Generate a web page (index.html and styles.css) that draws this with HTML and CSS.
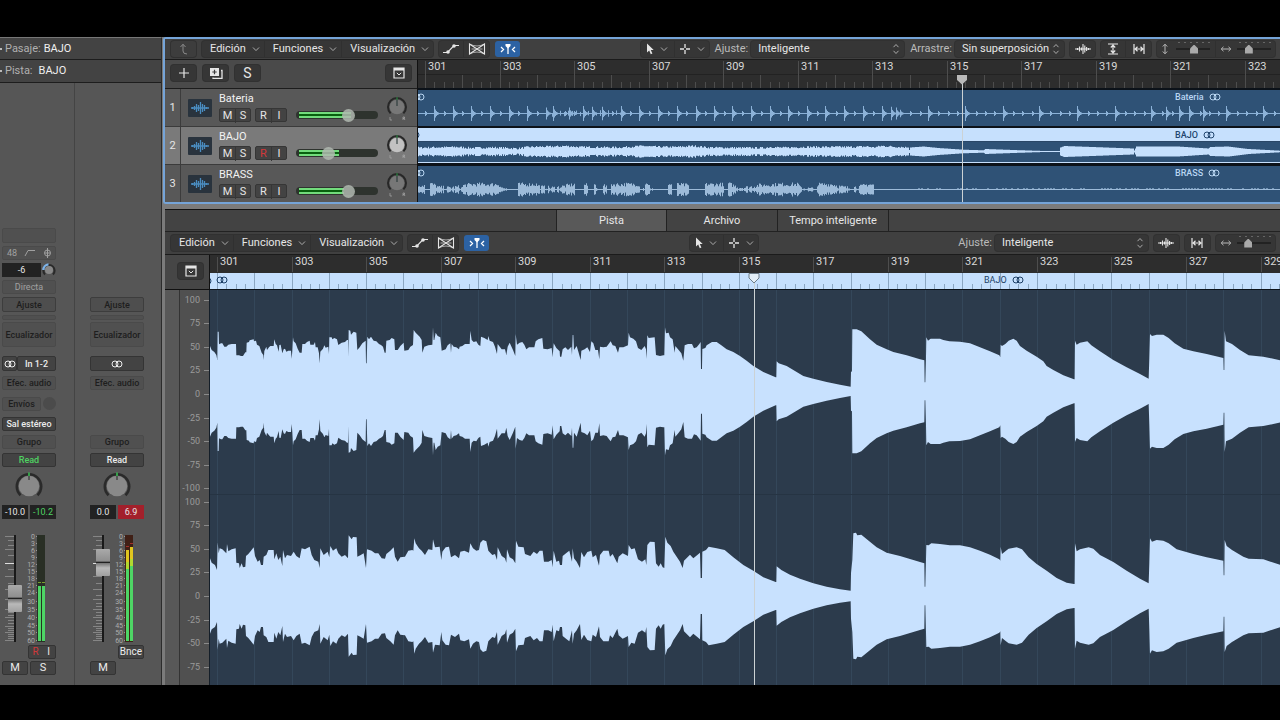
FILE: index.html
```html
<!DOCTYPE html>
<html lang="es">
<head>
<meta charset="utf-8">
<title>BAJO - Pistas</title>
<link rel="stylesheet" href="styles.css">
</head>
<body>
<svg class="symbols" aria-hidden="true">
  <symbol id="chev" viewBox="0 0 8 6"><path d="M1 1.5 4 4.600 7 1.5" fill="none" stroke="currentColor"/></symbol>
  <symbol id="updown" viewBox="0 0 8 12"><path d="M1.5 4.2 4 1.5 6.5 4.2M1.5 7.8 4 10.5 6.5 7.8" fill="none" stroke="currentColor"/></symbol>
  <symbol id="auto" viewBox="0 0 18 12"><path d="M1 9.5H5.5L12 2.5H17" fill="none" stroke="currentColor" stroke-width="1.2"/><circle cx="6" cy="9" r="1.8" fill="currentColor"/><circle cx="12" cy="3" r="1.8" fill="currentColor"/></symbol>
  <symbol id="flex" viewBox="0 0 18 12"><path d="M1.500 1V11L16.500 1V11Z" fill="none" stroke="currentColor" stroke-width="1.100"/><path d="M1.500 1Q9 5 16.500 1M1.500 11Q9 7 16.500 11M3.500 6H7M11 6H14.500" fill="none" stroke="currentColor" stroke-width=".7"/></symbol>
  <symbol id="catch" viewBox="0 0 16 12"><path d="M1 4 3.500 6.500 1 9M15 4 12.500 6.500 15 9M8 3V11" fill="none" stroke="currentColor" stroke-width="1.300"/><path d="M5.500 1H10.500V3L8 5.500 5.500 3Z" fill="currentColor"/></symbol>
  <symbol id="arrow" viewBox="0 0 8 12"><path d="M1 .5V9.500L3.200 7.500 4.800 11.300 6.400 10.600 4.800 7H7.700Z" fill="currentColor"/></symbol>
  <symbol id="cross" viewBox="0 0 12 12"><path d="M6 1V5M6 7V11M1 6H5M7 6H11" stroke="currentColor" stroke-width="1.300"/></symbol>
  <symbol id="wave" viewBox="0 0 18 12"><path d="M1 6H17M3.500 5V7M5.500 3.500V8.500M7.500 4.500V7.500M9 1V11M10.800 2.500V9.500M12.600 4V8M14.500 5V7" stroke="currentColor" stroke-width="1.100"/></symbol>
  <symbol id="fitv" viewBox="0 0 12 12"><path d="M1 1H11M1 11H11M6 2.500V9.500M3.800 4.500 6 2.200 8.200 4.500M3.800 7.500 6 9.800 8.200 7.500" fill="none" stroke="currentColor" stroke-width="1.200"/></symbol>
  <symbol id="fith" viewBox="0 0 12 12"><path d="M1 1V11M11 1V11M2.500 6H9.500M4.500 3.800 2.200 6 4.500 8.200M7.500 3.800 9.800 6 7.500 8.200" fill="none" stroke="currentColor" stroke-width="1.200"/></symbol>
  <symbol id="resv" viewBox="0 0 6 12"><path d="M3 1.500V10.500M.8 3.500 3 1.200 5.200 3.500M.8 8.500 3 10.800 5.200 8.500" fill="none" stroke="currentColor"/></symbol>
  <symbol id="resh" viewBox="0 0 12 6"><path d="M1.500 3H10.500M3.500 .8 1.200 3 3.500 5.200M8.500 .8 10.800 3 8.500 5.200" fill="none" stroke="currentColor"/></symbol>
  <symbol id="drop" viewBox="0 0 12 12"><path d="M1 1H11V11H1Z" fill="none" stroke="currentColor" stroke-width="1.200"/><path d="M1 1H11V3.500H1Z" fill="currentColor"/><path d="M3.800 5.800 6 8 8.200 5.800" fill="none" stroke="currentColor"/></symbol>
  <symbol id="stereo" viewBox="0 0 12 8"><circle cx="4" cy="4" r="3" fill="none" stroke="currentColor"/><circle cx="8" cy="4" r="3" fill="none" stroke="currentColor"/></symbol>
  <symbol id="audio" viewBox="0 0 24 18"><path d="M3 9H21M4.500 8V10M6.500 7V11M8.500 5V13M10.500 6V12M12.500 3V15M14.500 5V13M16.500 6V12M18.500 8V10" stroke="currentColor" stroke-width="1.300"/></symbol>
  <symbol id="pan" viewBox="0 0 22 26"><path d="M4.600 17.400A9 9 0 1 1 17.400 17.400" fill="none" stroke="#272727" stroke-width="2"/><circle cx="11" cy="11" r="7.300" fill="currentColor"/><path d="M11 2V10" stroke="#233" stroke-width="1"/><path d="M11 1V4" stroke="#2f8f43"/><path d="M4 21V24H6M17 24V21H18.500V22.500H17M18 22.500 19 24" fill="none" stroke="#aaa" stroke-width=".7"/></symbol>
  <symbol id="knob" viewBox="0 0 28 28"><path d="M5.500 23.200A12.200 12.200 0 1 1 22.500 23.200" fill="none" stroke="#2a2a2a" stroke-width="2.600"/><circle cx="14" cy="14" r="10.300" fill="#898989"/><path d="M14 3V8" stroke="#222"/><path d="M14 .5V4" stroke="#38c653" stroke-width="1.500"/></symbol>
</svg>

<div class="app">
  <aside class="inspector">
    <div class="insp-row"><i></i><span>Pasaje:</span><b>BAJO</b></div>
    <div class="insp-row tall"><i></i><span>Pista:</span><b class="wide">BAJO</b></div>
    <div class="strips">
      <section class="strip">
        <div class="slot r1"></div>
        <div class="slot r2 trio"><span>48</span><svg width="12" height="8" viewBox="0 0 12 8"><path d="M1 7 4 1.500H11" fill="none" stroke="currentColor"/></svg><svg width="9" height="10" viewBox="0 0 9 10"><path d="M4.500 0V10M1.500 5A3 3 0 0 0 7.500 5A3 3 0 0 0 1.500 5M2 5H7" fill="none" stroke="currentColor"/></svg></div>
        <div class="r3 gain"><output>-6</output><svg width="14" height="14" viewBox="0 0 14 14"><path d="M3 11.500A5.600 5.600 0 1 1 11 11.500" fill="none" stroke="#292929" stroke-width="2"/><path d="M1.400 7A5.600 5.600 0 0 1 6.500 1.400" fill="none" stroke="#7db4ea" stroke-width="2.400"/><circle cx="7" cy="7" r="4" fill="#888"/></svg></div>
        <button class="slot r4 mid">Directa</button>
        <button class="slot r5 edge">Ajuste</button>
        <div class="slot r6"></div>
        <button class="slot r7">Ecualizador</button>
        <div class="r8 input"><button class="lit" aria-label="Estéreo"><svg width="12" height="8"><use href="#stereo"/></svg></button><button class="lit">In 1-2</button></div>
        <button class="slot r9">Efec. audio</button>
        <div class="r10 sends"><button class="slot">Envíos</button><i></i></div>
        <button class="lit r11">Sal estéreo</button>
        <button class="slot r12">Grupo</button>
        <button class="lit r13 green">Read</button>
        <svg class="r14 knob" width="28" height="28"><use href="#knob"/></svg>
        <div class="r15 pair values"><output>-10.0</output><output class="green">-10.2</output></div>
        <div class="r16 fader"><div class="fader-slot"><svg class="fader-ticks"></svg><input type="range" class="fader-input" min="0" max="1000" value="375" aria-label="Volumen BAJO"></div><svg class="meter" data-level="51"></svg></div>
        <div class="r17 rec"><button class="red">R</button><button>I</button></div>
        <div class="r18 pair"><button class="lit big">M</button><button class="lit big">S</button></div>
      </section>
      <section class="strip second">
        <button class="slot r5 edge">Ajuste</button>
        <div class="slot r6"></div>
        <button class="slot r7">Ecualizador</button>
        <button class="lit r8" aria-label="Estéreo"><svg width="12" height="8"><use href="#stereo"/></svg></button>
        <button class="slot r9">Efec. audio</button>
        <button class="slot r12">Grupo</button>
        <button class="lit r13">Read</button>
        <svg class="r14 knob" width="28" height="28"><use href="#knob"/></svg>
        <div class="r15 pair values"><output>0.0</output><output class="clip">6.9</output></div>
        <div class="r16 fader"><div class="fader-slot"><svg class="fader-ticks"></svg><input type="range" class="fader-input" min="0" max="1000" value="825" aria-label="Volumen general"></div><svg class="meter" data-level="12"></svg></div>
        <button class="lit r17 bounce">Bnce</button>
        <div class="r18 pair"><button class="lit big">M</button></div>
      </section>
    </div>
  </aside>

  <main class="work">
    <section class="arrange">
      <div class="toolbar">
        <button class="tb solo dim" aria-label="Subir"><svg width="10" height="12" viewBox="0 0 10 12"><path d="M1.500 4 4 1.200 6.500 4M4 1.500V8Q4 11 8 11" fill="none" stroke="currentColor"/></svg></button>
        <div class="group menus"><button>Edición<svg width="8" height="6"><use href="#chev"/></svg></button><button>Funciones<svg width="8" height="6"><use href="#chev"/></svg></button><button>Visualización<svg width="8" height="6"><use href="#chev"/></svg></button></div>
        <div class="group"><button class="ic" aria-label="Automatización"><svg width="18" height="12"><use href="#auto"/></svg></button><button class="ic" aria-label="Flex"><svg width="18" height="12"><use href="#flex"/></svg></button></div>
        <button class="tb solo on" aria-label="Captura"><svg width="16" height="12"><use href="#catch"/></svg></button>
        <div class="group tools"><button aria-label="Puntero"><svg width="8" height="12"><use href="#arrow"/></svg><svg width="8" height="6"><use href="#chev"/></svg></button><button aria-label="Marquesina"><svg width="12" height="12"><use href="#cross"/></svg><svg width="8" height="6"><use href="#chev"/></svg></button></div>
        <label for="snap">Ajuste:</label>
        <span class="sel long"><select id="snap"><option>Inteligente</option></select><svg width="8" height="12"><use href="#updown"/></svg></span>
        <label for="drag">Arrastre:</label>
        <span class="sel short"><select id="drag"><option>Sin superposición</option></select><svg width="8" height="12"><use href="#updown"/></svg></span>
        <button class="tb solo" aria-label="Zoom de onda"><svg width="18" height="12"><use href="#wave"/></svg></button>
        <div class="group"><button class="ic" aria-label="Ajustar alto"><svg width="12" height="12"><use href="#fitv"/></svg></button><button class="ic" aria-label="Ajustar ancho"><svg width="12" height="12"><use href="#fith"/></svg></button></div>
        <div class="group zooms"><span><svg width="6" height="12"><use href="#resv"/></svg><input type="range" value="54" aria-label="Zoom vertical"></span><span><svg width="12" height="6"><use href="#resh"/></svg><input type="range" value="30" aria-label="Zoom horizontal"></span></div>
      </div>
      <div class="arr-body">
        <div class="heads">
          <div class="heads-bar">
            <button class="tb" aria-label="Añadir pista"><svg width="12" height="12" viewBox="0 0 12 12"><path d="M6 1V11M1 6H11" stroke="currentColor" stroke-width="1.200"/></svg></button>
            <button class="tb" aria-label="Duplicar pista"><svg width="14" height="12" viewBox="0 0 14 12"><path d="M1 1H10V9H1Z" fill="currentColor"/><path d="M5.500 2.800V7.200M3.300 5H7.700" stroke="#3a3a3a" stroke-width="1.200"/><path d="M12 3.500H13V11.300H4V10.500" fill="none" stroke="currentColor" stroke-width="1.300"/></svg></button>
            <button class="tb letter">S</button>
            <button class="tb last" aria-label="Opciones"><svg width="12" height="12"><use href="#drop"/></svg></button>
          </div>
          <div class="track">
            <span class="num">1</span><span class="ticon"><svg width="24" height="18"><use href="#audio"/></svg></span>
            <div class="tmain"><b>Bateria</b><div class="tctl"><span class="duo"><button>M</button><button>S</button></span><span class="duo"><button>R</button><button>I</button></span><input type="range" class="vol v1" value="66" aria-label="Volumen Bateria"></div></div>
            <svg class="tpan" width="22" height="26"><use href="#pan"/></svg>
          </div>
          <div class="track picked">
            <span class="num">2</span><span class="ticon"><svg width="24" height="18"><use href="#audio"/></svg></span>
            <div class="tmain"><b>BAJO</b><div class="tctl"><span class="duo"><button>M</button><button>S</button></span><span class="duo"><button class="red">R</button><button>I</button></span><input type="range" class="vol v2" value="38" aria-label="Volumen BAJO"></div></div>
            <svg class="tpan" width="22" height="26"><use href="#pan"/></svg>
          </div>
          <div class="track">
            <span class="num">3</span><span class="ticon"><svg width="24" height="18"><use href="#audio"/></svg></span>
            <div class="tmain"><b>BRASS</b><div class="tctl"><span class="duo"><button>M</button><button>S</button></span><span class="duo"><button>R</button><button>I</button></span><input type="range" class="vol v3" value="66" aria-label="Volumen BRASS"></div></div>
            <svg class="tpan" width="22" height="26"><use href="#pan"/></svg>
          </div>
        </div>
        <div class="timeline">
          <svg class="ruler" id="ruler-top"></svg>
          <div class="lane"><svg class="lane-wave" id="wave-drums"></svg><svg class="edge-mark" width="12" height="8"><use href="#stereo"/></svg><span class="rlabel">Bateria<svg width="12" height="8"><use href="#stereo"/></svg></span></div>
          <div class="lane chosen"><svg class="lane-wave" id="wave-bass"></svg><svg class="edge-mark cut" width="12" height="8"><use href="#stereo"/></svg><span class="rlabel">BAJO<svg width="12" height="8"><use href="#stereo"/></svg></span></div>
          <div class="lane"><svg class="lane-wave" id="wave-brass"></svg><svg class="edge-mark" width="12" height="8"><use href="#stereo"/></svg><span class="rlabel">BRASS<svg width="12" height="8"><use href="#stereo"/></svg></span></div>
          <div class="playhead"><svg width="12" height="10" viewBox="0 0 12 10"><path d="M1 0H11V5L6 9.500 1 5Z" fill="#b9b9b9"/></svg></div>
        </div>
      </div>
    </section>

    <section class="editor">
      <nav class="tabs"><button class="active">Pista</button><button>Archivo</button><button>Tempo inteligente</button></nav>
      <div class="toolbar">
        <div class="group menus"><button>Edición<svg width="8" height="6"><use href="#chev"/></svg></button><button>Funciones<svg width="8" height="6"><use href="#chev"/></svg></button><button>Visualización<svg width="8" height="6"><use href="#chev"/></svg></button></div>
        <div class="group"><button class="ic" aria-label="Automatización"><svg width="18" height="12"><use href="#auto"/></svg></button><button class="ic" aria-label="Flex"><svg width="18" height="12"><use href="#flex"/></svg></button></div>
        <button class="tb solo on" aria-label="Captura"><svg width="16" height="12"><use href="#catch"/></svg></button>
        <div class="group tools centered"><button aria-label="Puntero"><svg width="8" height="12"><use href="#arrow"/></svg><svg width="8" height="6"><use href="#chev"/></svg></button><button aria-label="Marquesina"><svg width="12" height="12"><use href="#cross"/></svg><svg width="8" height="6"><use href="#chev"/></svg></button></div>
        <label for="snap2">Ajuste:</label>
        <span class="sel long"><select id="snap2"><option>Inteligente</option></select><svg width="8" height="12"><use href="#updown"/></svg></span>
        <button class="tb solo" aria-label="Zoom de onda"><svg width="18" height="12"><use href="#wave"/></svg></button>
        <button class="tb solo" aria-label="Ajustar ancho"><svg width="12" height="12"><use href="#fith"/></svg></button>
        <div class="group zooms"><span><svg width="12" height="6"><use href="#resh"/></svg><input type="range" value="28" aria-label="Zoom horizontal"></span></div>
      </div>
      <div class="ed-body">
        <div class="corner"><button class="tb" aria-label="Opciones"><svg width="12" height="12"><use href="#drop"/></svg></button></div>
        <div class="axis"><svg id="axis"></svg></div>
        <div class="canvas">
          <svg class="ed-ruler" id="ruler-ed"></svg>
          <div class="strip-name"><svg class="edge-mark cut" width="12" height="8"><use href="#stereo"/></svg><svg class="first" width="12" height="8"><use href="#stereo"/></svg><span class="rlabel">BAJO<svg width="12" height="8"><use href="#stereo"/></svg></span></div>
          <svg class="big-wave" id="wave-ed"></svg>
          <div class="playhead"><svg width="12" height="11" viewBox="0 0 12 11"><path d="M1 .5H11V5L6 10 1 5Z" fill="#e3eef7" stroke="#6d7d88"/></svg></div>
        </div>
      </div>
    </section>
  </main>
</div>
<script src="app.js"></script>
</body>
</html>
```

FILE: styles.css
```css
* { box-sizing: border-box; }
body { margin: 0; background: #000; color: #e6e6e6; font: 11px/14px Roboto, "Noto Sans", sans-serif; }
button, select, input { font: inherit; color: inherit; margin: 0; padding: 0; border: 0; }
button { background: none; display: flex; align-items: center; justify-content: center; }
svg { display: block; flex: none; }
.symbols { position: absolute; width: 0; height: 0; }
.green { color: #4fd262 !important; }
.red { color: #d2383a !important; }

.app { min-height: 100vh; padding: 37px 0 35px; display: grid; grid-template-columns: 162px 1fr; overflow: hidden; }

/* Inspector */
.inspector { display: flex; flex-direction: column; background: #565656; border-top: 1px solid #777; border-right: 1px solid #2c2c2c; min-width: 0; }
.insp-row { height: 22px; display: flex; align-items: center; background: #434343; border-bottom: 1px solid #1d1d1d; color: #b0b0b0; }
.insp-row.tall { height: 23px; }
.insp-row i { width: 2px; height: 2px; background: #bbb; margin-right: 3px; }
.insp-row b { font-weight: 400; color: #f0f0f0; margin-left: 3px; }
.insp-row b.wide { margin-left: 6px; }
.strips { flex: 1; display: grid; grid-template-columns: 75px 1fr; }
.strip { display: grid; grid-template-columns: 54px; align-content: start; align-items: start; padding: 145px 0 0 2px; border-right: 1px solid #444; font-size: 9px; line-height: 12px;
  grid-template-rows: 18px 17px 17px 17px 18px 7px 34px 20px 21px 20px 18px 18px 19px 33px 30px 110px 16px 16px; }
.strip.second { padding-left: 15px; border-right: 0; }
.r1 { grid-row: 1; height: 15px; } .r2 { grid-row: 2; height: 14px; } .r3 { grid-row: 3; height: 14px; }
.r4 { grid-row: 4; height: 14px; } .r5 { grid-row: 5; height: 15px; } .r6 { grid-row: 6; height: 5px; }
.r7 { grid-row: 7; height: 25px; } .r8 { grid-row: 8; height: 15px; } .r9 { grid-row: 9; height: 14px; }
.r10 { grid-row: 10; height: 14px; } .r11 { grid-row: 11; height: 14px; } .r12 { grid-row: 12; height: 14px; }
.r13 { grid-row: 13; height: 14px; } .r14 { grid-row: 14; } .r15 { grid-row: 15; height: 14px; }
.r16 { grid-row: 16; height: 108px; } .r17 { grid-row: 17; height: 14px; } .r18 { grid-row: 18; height: 14px; }
.slot, .lit { width: 100%; border: 1px solid #4a4a4a; border-radius: 2px; background: #505050; color: #1e1e1e; font-weight: 500; white-space: nowrap; }
.slot.edge { background: #4e4e4e; border-color: #3d3d3d; }
.slot.mid, .slot.trio { color: #a0a0a0; font-weight: 400; }
.lit { background: #434343; border-color: #343434; color: #ececec; }
.trio { display: grid; grid-template-columns: 18px 18px 1fr; align-items: center; justify-items: center; }
.gain { display: grid; grid-template-columns: 39px 14px; gap: 1px; }
.gain output, .values output { background: #222; text-align: center; line-height: 14px; height: 14px; color: #e8e8e8; }
.values .clip { background: #a3202b; }
.input { display: grid; grid-template-columns: 15px 1fr; }
.input .lit { height: 15px; }
.sends { display: grid; grid-template-columns: 39px 13px; gap: 2px; }
.sends .slot { height: 14px; }
.sends i { width: 13px; height: 13px; border-radius: 50%; background: #4b4b4b; }
.knob { justify-self: center; }
.pair { display: grid; grid-template-columns: 26px 26px; gap: 2px; }
.big { height: 14px; font-size: 11px; font-weight: 400; }
.rec { justify-self: end; display: grid; grid-template-columns: 13px 13px; background: #434343; border: 1px solid #343434; border-radius: 2px; font-size: 10px; }
.bounce { width: 26px; justify-self: end; font-size: 10px; font-weight: 400; }
.fader { display: grid; grid-template-columns: 26px 28px; }
.fader-slot { position: relative; height: 107px; }
.fader-ticks, .meter { width: 28px; height: 107px; font-size: 7px; overflow: visible; }
.fader-input { position: absolute; left: 6px; top: 0; width: 14px; height: 107px; writing-mode: vertical-lr; direction: rtl; appearance: none; background: linear-gradient(90deg, transparent 6px, #191919 6px 8px, transparent 8px); }
.fader-input::-webkit-slider-thumb { appearance: none; width: 14px; height: 27px; border-radius: 1px; background: linear-gradient(#aaa, #8e8e8e 45%, #555 47%, #222 50%, #777 53%, #b9b9b9 70%, #a0a0a0); }

/* Shared toolbars */
.work { display: flex; flex-direction: column; min-width: 0; background: #7b7b7b; }
.toolbar { height: 21px; display: flex; align-items: center; gap: 6px; padding: 0 5px 0 6px; background: #404040; border-bottom: 1px solid #1b1b1b; white-space: nowrap; }
.toolbar label { color: #bbb; margin-right: -3px; }
.group, .tb, .sel { height: 16px; background: #363636; border-radius: 3px; box-shadow: 0 0 0 1px #313131; }
.group { display: flex; flex: none; }
.group > * { height: 16px; border-right: 1px solid #303030; }
.group > *:last-child { border-right: 0; }
.tb { width: 25px; flex: none; }
.dim { color: #8a8a8a; background: #3d3d3d; }
.on { background: #2c62a3; box-shadow: none; color: #fff; }
.ic { width: 25px; }
.menus button { padding: 0 4px 0 8px; gap: 6px; }
.menus button svg, .tools svg + svg { color: #aaa; }
.tools { margin-left: auto; }
.tools.centered { margin-right: auto; }
.tools button { width: 34px; gap: 6px; }
.sel { position: relative; flex: none; }
.sel select { appearance: none; width: 100%; height: 15px; padding-left: 7px; background: none; }
.sel.long { width: 153px; }
.sel.short { width: 109px; }
.sel svg { position: absolute; right: 4px; top: 2px; color: #aaa; pointer-events: none; }
.zooms { color: #b8b8b8; }
.zooms span { width: 59px; display: flex; align-items: center; justify-content: center; gap: 8px; }
.zooms svg[width="12"] { margin-right: -3px; }
.zooms input { appearance: none; width: 34px; height: 16px; background: radial-gradient(#666 1px, transparent 1px) 0 0 / 6px 3px repeat-x, linear-gradient(transparent 7px, #222 7px 9px, transparent 9px); }
.zooms input::-webkit-slider-thumb { appearance: none; width: 8px; height: 9px; background: #aaa; clip-path: polygon(50% 0, 100% 45%, 100% 100%, 0 100%, 0 45%); }

/* Arrange window */
.arrange { border: 2px solid #75a4d8; border-right: 0; margin-left: 1px; border-radius: 3px 0 0 3px; }
.arr-body { display: grid; grid-template-columns: 253px 1fr; }
.heads { background: #585858; border-right: 1px solid #111; }
.heads-bar { height: 29px; display: flex; align-items: center; gap: 7px; padding: 0 6px 3px; background: #4a4a4a; border-bottom: 1px solid #1c1c1c; }
.heads-bar .last { margin-left: auto; }
.letter { font-size: 14px; }
.track { height: 38px; display: grid; grid-template-columns: 16px 38px 1fr 31px; border-bottom: 1px solid #3b3b3b; }
.track:last-child { height: 37px; border-bottom: 0; }
.track.picked { background: #7a7a7a; }
.num { align-self: stretch; display: grid; place-items: center; border-right: 1px solid #3c3c3c; }
.ticon { align-self: center; justify-self: center; background: #29333d; color: #4a8cc0; border-radius: 1px; }
.tmain { padding-top: 3px; }
.tmain b { display: block; font-weight: 400; color: #f2f2f2; }
.tctl { display: flex; align-items: center; gap: 4px; margin-top: 2px; }
.duo { width: 32px; height: 14px; display: grid; grid-template-columns: 1fr 1fr; background: #434343; border: 1px solid #363636; border-radius: 2px; }
.duo button + button { border-left: 1px solid #363636; }
.vol { appearance: none; width: 82px; height: 8px; margin-left: 5px; border-radius: 4px; background: linear-gradient(#72dc7c 2px, #08600f 2px 4px, #72dc7c 4px) 3px 1px / var(--lvl) 6px no-repeat, #2e332e; }
.v1 { --lvl: 52px; } .v2 { --lvl: 40px; } .v3 { --lvl: 45px; }
.vol::-webkit-slider-thumb { appearance: none; width: 13px; height: 13px; border-radius: 50%; background: rgba(176, 184, 176, .85); }
.tpan { margin-top: 7px; color: #777; }
.picked .tpan { color: #c2c2c2; }

.timeline { position: relative; overflow: hidden; background: #0c1219; min-width: 0; }
.ruler { width: 100%; height: 28px; background: #2d2d2d; font-size: 11px; }
.lane { position: relative; height: 36px; margin-top: 2px; background: #2f5276; color: #b9d6f2; overflow: hidden; }
.lane.chosen { background: linear-gradient(#c6e0fd 13px, #2a4767 13px 14px, #2f5276 14px 34px, #c6e0fd 34px 35px, #0c1219 35px); color: #22466f; }
.lane-wave { width: 100%; height: 36px; }
.edge-mark { position: absolute; left: -5px; top: 3px; }
.edge-mark.cut { left: -10px; }
.rlabel { display: flex; align-items: center; gap: 5px; font-size: 9px; line-height: 12px; font-weight: 500; }
.lane .rlabel { position: absolute; left: 757px; top: 1px; }
.playhead { position: absolute; width: 1px; background: #ccd2d4; bottom: 0; }
.playhead svg { position: absolute; left: -6px; top: 0; }
.timeline .playhead { left: 544px; top: 15px; }

/* Audio editor */
.editor { flex: 1; display: flex; flex-direction: column; margin: 5px 0 0 3px; border-top: 1px solid #111; min-height: 0; }
.tabs { height: 22px; display: flex; justify-content: center; background: #434343; border-bottom: 1px solid #222; }
.tabs button { width: 111px; border-right: 1px solid #222; }
.tabs button:first-child { border-left: 1px solid #222; }
.tabs .active { background: #595959; }
.ed-body { flex: 1; display: grid; grid-template-columns: 45px 1fr; grid-template-rows: 35px 1fr; min-height: 0; }
.editor .toolbar { height: 23px; }
.corner { background: #464646; border-bottom: 1px solid #111; border-right: 1px solid #111; display: flex; align-items: center; justify-content: end; padding: 0 6px 3px 0; }
.axis { grid-column: 1; background: linear-gradient(90deg, #585858 14px, #333 14px 15px, #505050 15px); border-right: 1px solid #141e28; }
.axis svg { width: 44px; height: 100%; font-size: 9px; }
.canvas { grid-column: 2; grid-row: 1 / 3; position: relative; overflow: hidden; background: #2c3b4c; display: flex; flex-direction: column; min-width: 0; }
.ed-ruler { width: 100%; height: 35px; font-size: 11px; }
.strip-name { position: absolute; left: 0; top: 19px; height: 12px; color: #1d3f66; }
.strip-name .first { position: absolute; left: 6px; top: 2px; }
.strip-name .rlabel { padding-left: 774px; font-weight: 400; }
.big-wave { width: 100%; flex: 1; }
.canvas .playhead { left: 544px; top: 18px; }
```

FILE: app.js
```js
const NS = "http://www.w3.org/2000/svg";
const BAR = 37.27;

function add(parent, tag, attrs, text) {
  const el = document.createElementNS(NS, tag);
  for (const k in attrs) el.setAttribute(k, attrs[k]);
  if (text !== undefined) el.textContent = text;
  parent.appendChild(el);
  return el;
}
const byId = (id) => document.getElementById(id);
function line(svg, x, y1, y2, color) {
  add(svg, "rect", { x: Math.round(x), y: y1, width: 1, height: y2 - y1, fill: color });
}

/* Bar rulers */
const top1 = byId("ruler-top");
const topWidth = top1.getBoundingClientRect().width;
add(top1, "rect", { x: 0, y: 14, width: "100%", height: 1, fill: "#222" });
for (let q = 0; 7 + q * BAR / 4 < topWidth; q++) {
  const x = 7 + q * BAR / 4;
  if (q % 8 === 0) {
    line(top1, x, 1, 28, "#4d4d4d");
    add(top1, "text", { x: Math.round(x) + 3, y: 10, fill: "#d8d8d8" }, 301 + q / 4);
  } else line(top1, x, q % 4 === 0 ? 15 : 22, 28, "#4d4d4d");
}
const ed = byId("ruler-ed");
const edWidth = ed.getBoundingClientRect().width;
add(ed, "rect", { x: 0, y: 0, width: "100%", height: 18, fill: "#2d2d2d" });
add(ed, "rect", { x: 0, y: 18, width: "100%", height: 16, fill: "#c6e0fd" });
add(ed, "rect", { x: 0, y: 34, width: "100%", height: 1, fill: "#0c1219" });
const bw = byId("wave-ed");
for (let q = 0; 7 + q * BAR / 4 < edWidth; q++) {
  const x = 7 + q * BAR / 4;
  if (q % 8 === 0) {
    line(ed, x, 2, 17, "#4d4d4d");
    add(ed, "text", { x: Math.round(x) + 3, y: 10, fill: "#d8d8d8" }, 301 + q / 4);
  }
  if (q % 4 === 0) {
    line(ed, x, 18, 34, "#8ba6c2");
    line(bw, x, 0, 900, "#34475a");
  } else line(ed, x, 29, 34, "#8ba6c2");
}
add(bw, "rect", { x: 0, y: 204, width: "100%", height: 1, fill: "#263443" });

/* Amplitude axis */
const ax = byId("axis");
[104, 306].forEach((mid) => {
  for (let v = 100; v >= -100; v -= 25) {
    const y = Math.round(mid - v * 0.944);
    if (mid + 100 > 400 && v < -75) continue;
    add(ax, "text", { x: 35, y: y + 3, fill: "#9a9a9a", "text-anchor": "end" }, v);
    add(ax, "rect", { x: 39, y: y, width: 5, height: 1, fill: "#8a8a8a" });
  }
});

/* Envelope points, x y pairs in thirds of a pixel */
const nums = (s) => s.trim().split(/\s+/).map((p) => p.split(",").map(Number));
const shift = (pts, dx) => pts.map(([x, y]) => [x + dx, y]);
const left = [
  ...nums(`135,138 140,150 148,156 154,165 157,180 158,95 161,95 162,133 168,130 172,130 178,140 184,140 190,134 200,132 213,132 214,166 222,166 228,168 234,168 241,157 244,157 245,128 252,126 254,121 266,118 267,124 273,122 276,134 283,138 290,158 295,165 296,180 298,153 304,140 306,150 312,142 316,138 326,138 328,118 332,132 336,136 341,155 343,135 347,134 352,160 356,148 360,146 364,155 370,152 378,152 380,176 382,152 384,112 386,124 392,130 398,146 404,158 410,158 412,132 420,132 426,126 434,122 436,134 446,134 450,126 452,142 458,142 462,160 464,190 466,155 474,146 478,136 482,143 490,140 492,162 493,112 500,112 502,118 508,114 516,118 520,135 530,128 540,126 546,120 549,120 550,170 551,90 556,92 558,104 566,95 574,98 577,150 584,142 592,130 602,122 603,190 605,190 607,110 612,118 618,110 626,122 634,124 642,132 648,135 654,140 659,158 662,158 664,122 674,120 680,114 688,118 690,150 698,150 706,138 716,128 718,152 730,150 736,140 744,135 746,90 752,98 758,104 764,110 770,120 772,158 778,140 790,136 802,134 804,82 806,120 808,120 812,98 818,108 826,112 830,152 842,148 848,136 856,130 858,158 860,132 866,140 874,142 882,148 884,140 892,138 900,132 914,132 916,92 920,120 926,126 934,124 940,134 946,138 948,110 958,114 968,120 970,108 974,122 984,126 990,140 996,162 998,132 1010,148 1020,148 1024,165 1028,140 1034,128 1044,150 1051,168 1052,102 1056,134 1064,128 1072,126 1078,134 1084,148 1092,142 1108,142 1112,124 1120,118 1132,114 1135,146 1148,148 1160,144 1163,172 1166,130 1174,144 1184,154`),
  ...shift(nums(`0,170 4,170 8,148 16,142 24,150 34,140 36,165 38,105 40,105 42,150 50,138 56,158 62,180 64,152 74,148 82,142 90,156 94,124 100,130 106,150 114,150 118,178 120,140 130,142 140,140 146,132 152,124 158,136 166,138 174,158 178,142 190,142 204,136 206,98 210,112 220,116 228,124 234,144 244,150 254,138 258,148 260,176 262,106 266,114 284,112 288,165 300,168 310,166 313,166 315,82 318,100 326,98 330,112 338,118 344,158 346,138 356,150 364,160 370,182 374,136 384,132 396,132 402,145 410,142 418,132 422,126 423,207 426,207 427,147 436,144 440,136 456,126 470,126 484,136 500,148 520,156 540,168 560,182 580,198 610,216 647,232 649,232 650,184 656,190 680,198 710,216 730,228 760,236 800,246 840,254 872,260 873,216 876,214 877,88 890,88 904,94 930,118 950,134 980,148 1000,156 1040,166 1080,178`), 1185),
  ...shift(nums(`73,181 74,247 76,247 78,175 79,112 84,122 92,116 120,116 130,120 148,124 180,125 210,130 240,142 270,154 298,166 301,172 302,134 306,138 316,132 326,122 340,116 350,122 360,138 380,152 410,170 430,184 440,198 460,210 490,226 522,238 524,238 525,122 530,134 540,128 562,124 574,136 600,154 640,180 680,202 720,222 746,236 748,175 750,102 756,108 770,104 790,104 806,114 824,130 850,146 880,154 920,162 970,174 971,210 973,210 974,92 978,124 996,132 1020,150 1046,166 1090,170 1120,176 1145,182`), 2205)
];
const right = [
  ...nums(`135,775 140,788 150,795 156,810 158,727 161,760 164,745 172,748 184,760 186,732 190,754 200,748 212,745 214,788 222,790 224,804 230,790 234,802 241,800 243,768 250,762 258,752 266,742 270,768 278,785 284,780 288,795 294,795 296,770 304,765 310,750 326,750 328,778 334,760 340,780 346,770 352,798 354,750 360,775 366,765 378,768 386,755 394,768 404,775 410,745 420,748 434,740 440,765 448,780 460,785 464,804 466,745 476,765 488,755 493,772 496,738 504,752 514,745 520,760 530,770 540,765 549,775 551,706 560,718 564,711 575,712 577,770 586,766 596,760 603,804 606,748 620,752 630,760 640,760 650,775 660,776 664,762 676,752 686,742 690,770 698,785 706,772 720,770 730,752 742,750 745,752 748,715 752,730 762,745 770,752 780,765 790,748 802,750 804,718 810,742 824,740 829,780 832,755 842,742 852,740 858,772 870,765 882,775 886,755 898,752 912,758 916,730 924,745 934,752 942,750 946,728 954,720 964,724 970,752 982,765 990,762 996,780 998,742 1010,768 1020,775 1024,788 1026,748 1034,772 1044,778 1051,790 1053,722 1060,740 1076,742 1080,762 1096,768 1106,755 1116,762 1124,752 1133,752 1137,785 1150,785 1160,780 1163,802 1166,752 1174,785 1182,782`),
  ...shift(nums(`0,795 6,795 8,768 20,758 28,752 36,785 38,745 42,775 50,785 60,804 64,756 72,772 82,756 94,752 98,772 108,765 117,797 120,765 130,752 146,752 150,770 158,762 172,790 176,770 188,760 204,768 206,735 214,748 224,745 234,778 246,785 256,778 259,795 262,735 270,725 284,726 288,790 296,800 302,790 308,802 313,804 316,710 322,728 332,738 340,755 350,770 360,785 368,804 372,782 384,770 390,764 400,775 412,765 420,758 422,834 426,834 427,755 438,750 446,740 470,745 494,750 520,772 550,795 580,812 610,832 647,846 649,846 650,799 664,810 690,824 720,836 760,850 800,860 840,868 872,872 873,820 877,780 880,700 888,698 892,706 904,704 926,722 950,742 980,758 1020,768 1080,786`), 1185),
  ...shift(nums(`73,790 74,860 76,860 78,780 79,735 86,736 94,730 120,732 150,736 180,736 210,742 240,752 270,764 298,778 301,782 302,740 306,762 318,752 326,746 350,742 366,748 386,772 410,792 440,812 470,834 500,848 522,852 524,852 525,730 530,754 540,748 566,742 580,746 600,765 640,786 680,812 720,836 746,850 748,790 750,715 756,725 770,720 790,722 806,730 830,748 880,762 920,772 970,782 971,826 973,826 974,720 980,738 996,750 1030,770 1046,776 1090,778 1145,796`), 2205)
];
function mirrored(pts, mid) {
  const low = pts.map(([x, y]) => [x, 2 * mid - y]).reverse();
  return "M" + [...pts, ...low].map((p) => p.join(" ")).join("L") + "Z";
}
const g = add(bw, "g", { transform: "translate(-45 10) scale(.33333)", fill: "#c8e1fe" });
add(g, "path", { d: mirrored(left, 274) });
add(g, "path", { d: mirrored(right, 888) });

/* Deterministic jitter for the overview waveforms */
let seed = 7;
const rnd = () => (seed = (seed * 16807) % 2147483647) / 2147483647;

const drums = byId("wave-drums");
let d = "M0 23.500H2000";
const hits = nums("71,1 128,1 184,1 241,1 298,1 351,1 407,.8 430,1 478,.8 520,1 546,.9 577,.9 632,1 686,1 743,1 800,1 857,1 911,1 966,1 1022,1 1079,1 1135,1 1190,1 1246,1 1303,1 1358,1 1416,1 1442,.9 1457,.8 1470,.5 1555,1 1665,1 1778,1 1888,1 2000,1 2114,1 2224,1 2267,.9 2308,1 2337,1 2380,1 2448,1 2560,1");
for (const [x3, a] of hits) {
  const x = Math.round(x3 / 3 - 8) + .5;
  [7.5, 4, 2.500, 1.500, 1].forEach((h, i) => { d += `M${x + i} ${23.5 - h * a}V${23.5 + h * a}`; });
}
for (let x3 = 45; x3 < 2640; x3 += 28) {
  const x = Math.round(x3 / 3 - 8) + .5;
  if (hits.some(([h]) => Math.abs(h - x3) < 9)) continue;
  d += `M${x} 21V26M${x + 1} 22V25`;
}
for (let x = 134.5; x < 207; x += 4) d += `M${x} ${23 - rnd() * 3}V${24 + rnd() * 3}`;
add(drums, "path", { d, stroke: "#8cb2d8", fill: "none" });

/* Amplitude keyframes: x, half height; jitter amount gives the ragged edge */
function ragged(svg, mid, keys, jitter, limit, color) {
  const pts = [];
  for (let i = 0; i < keys.length - 1; i++) {
    const [x0, a0] = keys[i], [x1, a1] = keys[i + 1];
    for (let x = x0; x < x1; x++) {
      let a = a0 + (a1 - a0) * (x - x0) / (x1 - x0);
      if (x < limit && a > .6) a += (rnd() - .5) * jitter;
      const y = mid - Math.max(.4, a);
      pts.push([x, y], [x + 1, y]);
    }
  }
  add(svg, "path", { d: mirrored(pts, mid), fill: color });
}
ragged(byId("wave-bass"), 23.500, nums("0,3.800 38,4.500 52,3.500 75,4 100,3 110,4.500 138,5 148,5.500 160,4.500 200,4 225,5.500 240,4.500 260,4.500 275,5.500 290,4 345,3.500 352,4.500 365,3.800 390,4.500 420,4.500 435,4.500 450,5 455,4 463,5.500 490,4 491,1.500 492,4 505,5 520,3.500 545,1.800 565,1.200 567,2.500 595,1.500 625,.5 641,.5 642,4 646,5.500 660,5 715,3 716,1 718,5 760,5 790,3 792,4.500 810,5 830,2.500 862,.8 863,.5 1500,.5"), 2, 488, "#c6e0fd");
ragged(byId("wave-brass"), 23.500, nums("0,4 6,4 7,.4 11,.4 12,6 17,4 20,2 30,1.500 40,2.500 43,1 45,4 55,5 70,5 80,5 84,1.500 90,.4 99,.4 100,5 118,5 122,2.500 135,1.500 145,3 156,5 157,.4 165,.4 166,5 169,4 170,.4 175,.4 176,5 179,2 180,.4 184,.4 185,5 188,2 189,.4 192,.4 193,5 220,5 222,1 226,1 227,6 233,1.500 235,.4 249,.4 250,5 253,5 254,.4 258,.4 259,5 270,4 271,.4 286,.4 287,5 304,5 306,.4 309,.4 310,6 320,2 330,2 340,4 360,5 380,5 382,1.500 398,.4 399,5 415,5 420,3 430,1.500 440,2.500 450,5 455,4.500 456,.4 1500,.4"), 4, 456, "#9dbbd9");
let faint = "";
for (let x = 500; x < 870; x += 3) if (rnd() > .45) faint += `M${x} 22.500h2`;
add(byId("wave-brass"), "path", { d: faint, stroke: "#7394b5" });

/* Channel strip faders and meters */
const marks = [[0, 1], [3, 8], [6, 15], [9, 22], [12, 29], [15, 36], [18, 43], [21, 50], [24, 57], [30, 66], [35, 74], [40, 82], [45, 90], [50, 97], [60, 105]];
document.querySelectorAll(".meter").forEach((svg) => {
  const level = +svg.dataset.level;
  const hot = level < 30;
  for (const [v, y] of marks) {
    add(svg, "text", { x: 7, y: y + 3, "text-anchor": "end", fill: "#adadad" }, v);
    add(svg, "rect", { x: 8, y, width: 2, height: 1, fill: "#999" });
  }
  add(svg, "rect", { x: 9, y: 0, width: 8, height: 107, fill: hot ? "#402016" : "#292f25" });
  [10, 14].forEach((x, i) => {
    const y = level + (hot && !i ? 3 : 0);
    add(svg, "rect", { x, y, width: 3, height: 106 - y, fill: "#4ed565" });
    if (hot) {
      add(svg, "rect", { x, y, width: 3, height: 12, fill: "#e0c51f" });
      add(svg, "rect", { x, y: y + 12, width: 3, height: 7, fill: "#b2d82f" });
    }
    add(svg, "rect", { x, y: y - 4, width: 3, height: 1, fill: hot ? "#a5302b" : "#77a02f" });
  });
});
document.querySelectorAll(".fader-ticks").forEach((svg) => {
  [1, 5, 10, 14, 20, 28, 34, 41, 48, 54, 60, 64, 68, 71, 74, 77, 80, 82, 85, 88, 91, 93, 95, 97, 99, 101, 103, 105].forEach((y) => {
    const big = [1, 14, 28, 41, 54, 64, 74, 82, 91, 97, 105].includes(y);
    add(svg, "rect", { x: big ? 3 : 6, y, width: big ? 9 : 6, height: 1, fill: y === 28 ? "#ddd" : "#858585" });
  });
});
```
